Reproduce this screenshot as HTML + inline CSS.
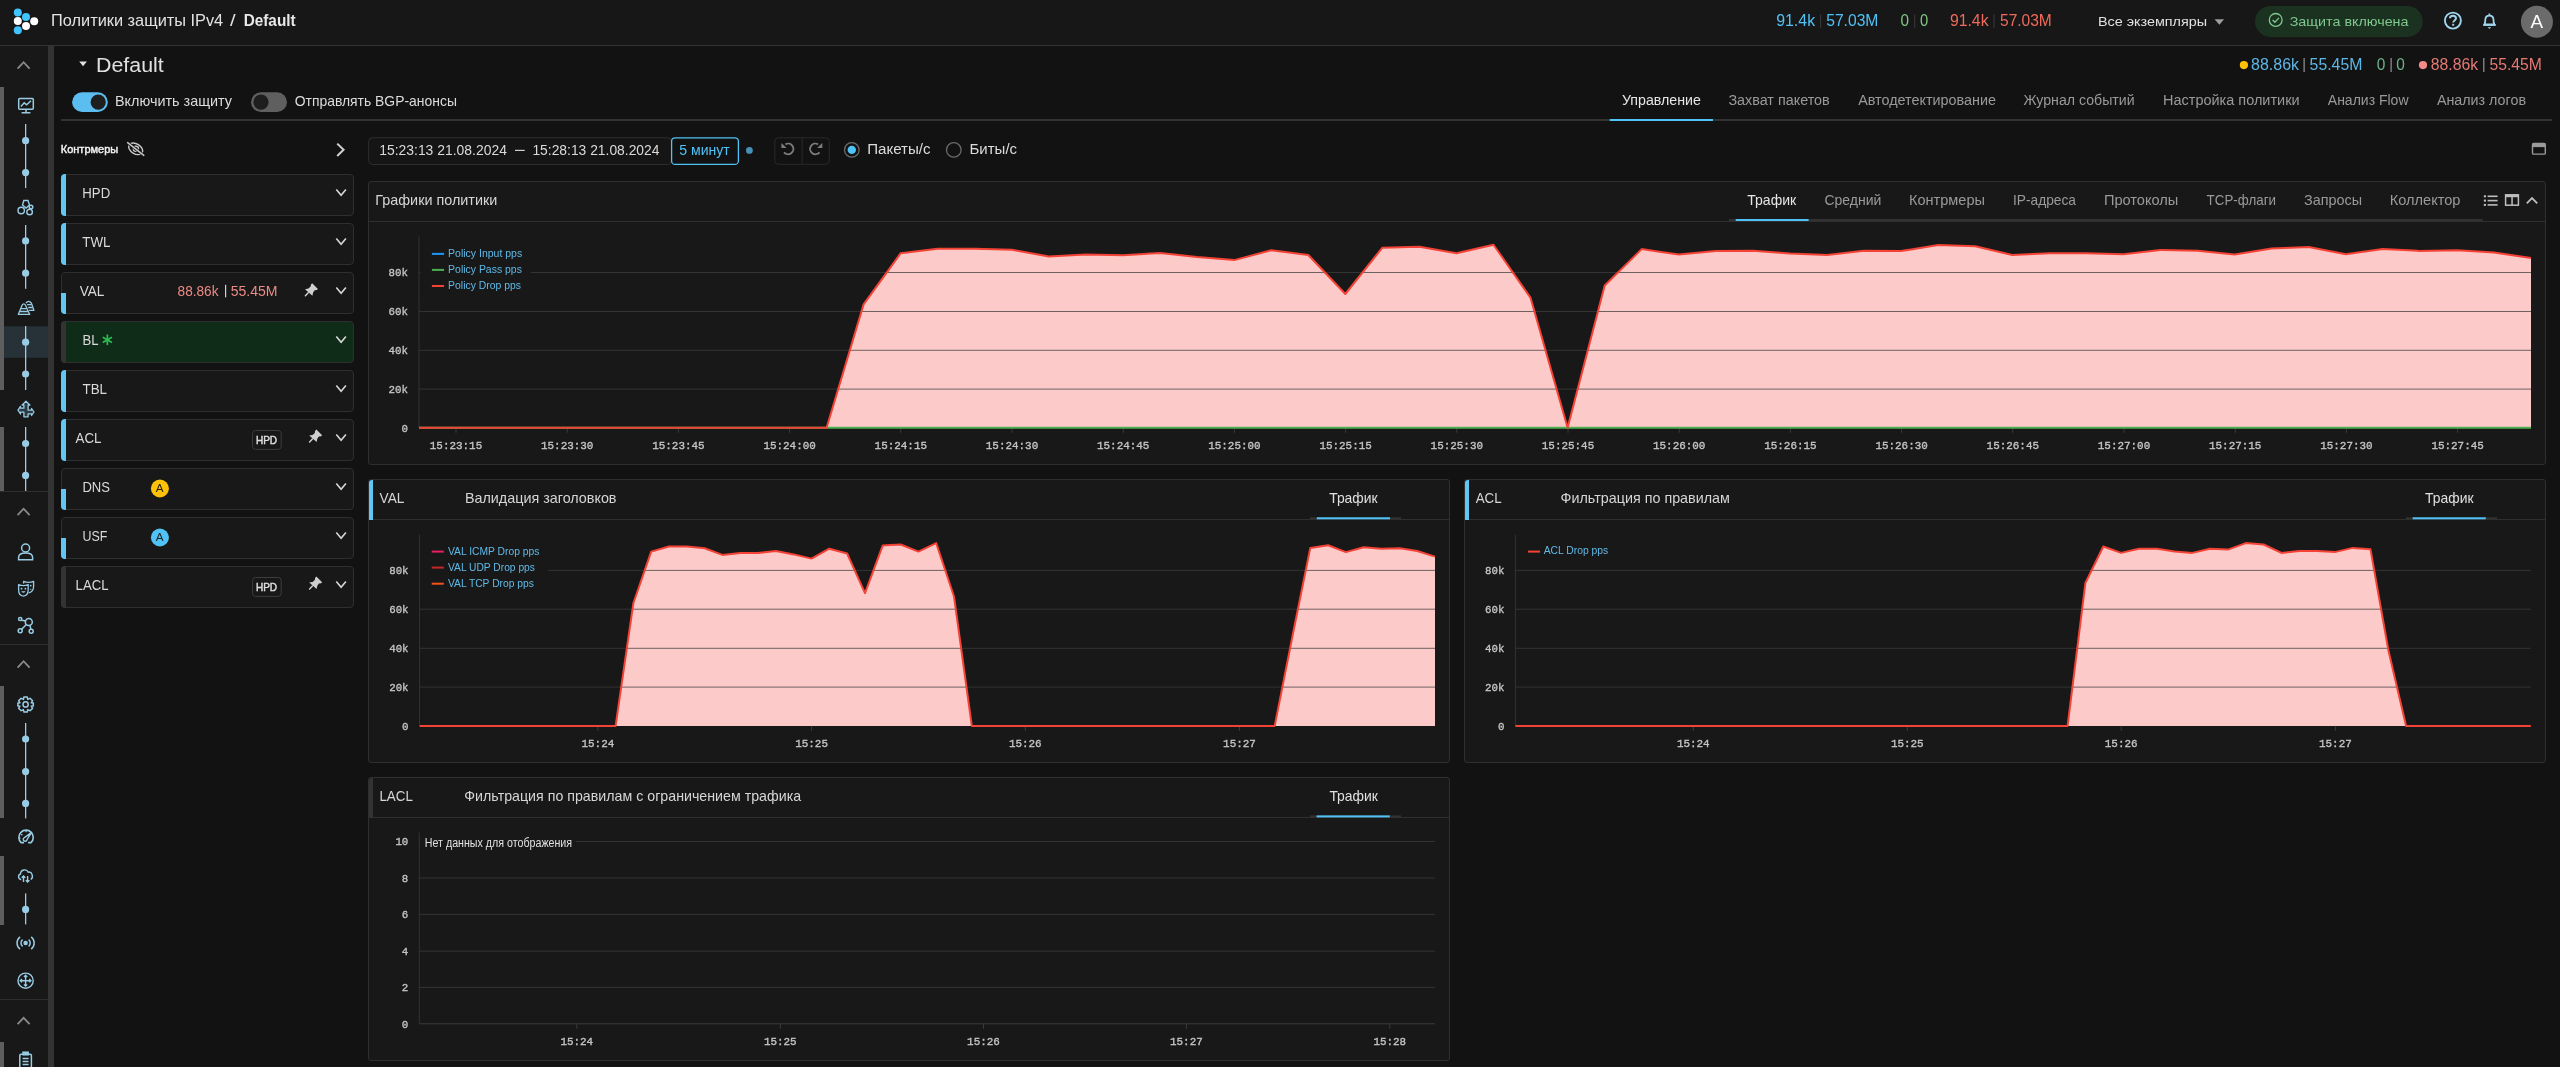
<!DOCTYPE html>
<html lang="ru"><head><meta charset="utf-8"><title>Политики защиты IPv4 / Default</title>
<style>
*{box-sizing:border-box;margin:0;padding:0}
html,body{width:2560px;height:1067px;overflow:hidden;background:#121212;font-family:"Liberation Sans",sans-serif;color:#e0e0e0}
#topbar{position:absolute;left:0;top:0;width:2560px;height:46px;background:#171717;border-bottom:1px solid #333}
#sidebar{position:absolute;left:0;top:46px;width:48px;height:1021px;background:#181818}
#sbstrip{position:absolute;left:48px;top:46px;width:6px;height:1021px;background:#333}
.gbar{position:absolute;left:0;width:4px;background:#5e5e5e}
#charts,#ui{position:absolute;left:0;top:0;will-change:transform}
#charts text.ax{font-family:"Liberation Mono",monospace;font-size:11.6px;fill:#c4c4c4;stroke:#c4c4c4;stroke-width:0.35px}
.card{position:absolute;background:#181818;border:1px solid #2f2f2f;border-radius:3px}
.card .hd{position:absolute;left:0;right:0;top:0;height:40px;border-bottom:1px solid #2f2f2f}
.card .acc{position:absolute;left:0;top:0;width:4px;height:40px;background:#62c6f5;border-radius:3px 0 0 0}
.card .acc.grey{background:#333}
.cm{position:absolute;left:61px;width:293px;height:42px;background:#181818;border:1px solid #2f2f2f;border-radius:4px}
.cm.bl{background:#0e2c18}
.acc{position:absolute;left:61px;width:5px;background:#62c6f5}
.acc.grey{background:#333}
</style></head><body>
<div id="topbar"></div>
<div id="sidebar"></div>
<div id="sbstrip"></div>
<div class="gbar" style="top:87px;height:303px"></div>
<div class="gbar" style="top:427px;height:64px"></div>
<div class="gbar" style="top:686px;height:132px"></div>
<div class="gbar" style="top:856px;height:69px"></div>
<div class="gbar" style="top:1042px;height:25px"></div>
<div class="cm" style="top:174px"></div>
<div class="acc" style="top:174px;height:42px;border-radius:4px 0 0 4px"></div>
<div class="cm" style="top:223px"></div>
<div class="acc" style="top:223px;height:42px;border-radius:4px 0 0 4px"></div>
<div class="cm" style="top:272px"></div>
<div class="acc" style="top:293px;height:21px;border-radius:0 0 0 4px"></div>
<div class="cm bl" style="top:321px"></div>
<div class="acc grey" style="top:321px;height:42px;border-radius:4px 0 0 4px"></div>
<div class="cm" style="top:370px"></div>
<div class="acc" style="top:370px;height:42px;border-radius:4px 0 0 4px"></div>
<div class="cm" style="top:419px"></div>
<div class="acc" style="top:419px;height:42px;border-radius:4px 0 0 4px"></div>
<div class="cm" style="top:468px"></div>
<div class="acc" style="top:489px;height:21px;border-radius:0 0 0 4px"></div>
<div class="cm" style="top:517px"></div>
<div class="acc" style="top:538px;height:21px;border-radius:0 0 0 4px"></div>
<div class="cm" style="top:566px"></div>
<div class="acc grey" style="top:566px;height:42px;border-radius:4px 0 0 4px"></div>
<div class="card" style="left:368px;top:181px;width:2178px;height:284px"><div class="hd"></div></div>
<div class="card" style="left:368px;top:479px;width:1082px;height:284px"><div class="hd"></div><div class="acc"></div></div>
<div class="card" style="left:1464px;top:479px;width:1082px;height:284px"><div class="hd"></div><div class="acc"></div></div>
<div class="card" style="left:368px;top:777px;width:1082px;height:284px"><div class="hd"></div><div class="acc grey"></div></div>
<svg id="charts" width="2560" height="1067" viewBox="0 0 2560 1067"><line x1="419.0" y1="236.5" x2="419.0" y2="427.8" stroke="#333" stroke-width="1"/>
<path d="M419.0,427.8 L419.0,427.8 L456.1,427.8 L493.1,427.8 L530.2,427.8 L567.2,427.8 L604.3,427.8 L641.3,427.8 L678.4,427.8 L715.4,427.8 L752.5,427.8 L789.5,427.8 L826.6,427.8 L863.6,304.4 L900.7,253.2 L937.7,248.7 L974.8,248.7 L1011.8,249.7 L1048.9,256.6 L1085.9,254.6 L1123.0,255.2 L1160.1,253.0 L1197.1,257.0 L1234.2,260.1 L1271.2,250.3 L1308.3,255.0 L1345.3,294.0 L1382.4,247.7 L1419.4,246.7 L1456.5,253.2 L1493.5,244.8 L1530.6,297.9 L1567.6,427.8 L1604.7,285.5 L1641.7,249.1 L1678.8,254.6 L1715.8,251.1 L1752.9,250.7 L1789.9,253.6 L1827.0,255.0 L1864.1,250.7 L1901.1,251.1 L1938.2,245.0 L1975.2,246.3 L2012.3,255.0 L2049.3,253.2 L2086.4,253.2 L2123.4,254.2 L2160.5,250.0 L2197.5,250.7 L2234.6,254.6 L2271.6,248.5 L2308.7,247.0 L2345.7,254.3 L2382.8,249.1 L2419.8,250.9 L2456.9,250.2 L2493.9,252.5 L2531.0,258.1 L2531.0,427.8 Z" fill="#fccbc9"/>
<line x1="419.0" y1="272.5" x2="2531.0" y2="272.5" stroke="#3d3d3d" stroke-opacity="0.74" stroke-width="1"/>
<line x1="419.0" y1="311.5" x2="2531.0" y2="311.5" stroke="#3d3d3d" stroke-opacity="0.74" stroke-width="1"/>
<line x1="419.0" y1="350.3" x2="2531.0" y2="350.3" stroke="#3d3d3d" stroke-opacity="0.74" stroke-width="1"/>
<line x1="419.0" y1="389.1" x2="2531.0" y2="389.1" stroke="#3d3d3d" stroke-opacity="0.74" stroke-width="1"/>
<line x1="456.0" y1="427.8" x2="456.0" y2="432.8" stroke="#3b3b3b" stroke-width="1"/>
<text x="456.0" y="448.8" text-anchor="middle" class="ax" textLength="52.4" lengthAdjust="spacingAndGlyphs">15:23:15</text>
<line x1="567.2" y1="427.8" x2="567.2" y2="432.8" stroke="#3b3b3b" stroke-width="1"/>
<text x="567.2" y="448.8" text-anchor="middle" class="ax" textLength="52.4" lengthAdjust="spacingAndGlyphs">15:23:30</text>
<line x1="678.4" y1="427.8" x2="678.4" y2="432.8" stroke="#3b3b3b" stroke-width="1"/>
<text x="678.4" y="448.8" text-anchor="middle" class="ax" textLength="52.4" lengthAdjust="spacingAndGlyphs">15:23:45</text>
<line x1="789.6" y1="427.8" x2="789.6" y2="432.8" stroke="#3b3b3b" stroke-width="1"/>
<text x="789.6" y="448.8" text-anchor="middle" class="ax" textLength="52.4" lengthAdjust="spacingAndGlyphs">15:24:00</text>
<line x1="900.8" y1="427.8" x2="900.8" y2="432.8" stroke="#3b3b3b" stroke-width="1"/>
<text x="900.8" y="448.8" text-anchor="middle" class="ax" textLength="52.4" lengthAdjust="spacingAndGlyphs">15:24:15</text>
<line x1="1012.0" y1="427.8" x2="1012.0" y2="432.8" stroke="#3b3b3b" stroke-width="1"/>
<text x="1012.0" y="448.8" text-anchor="middle" class="ax" textLength="52.4" lengthAdjust="spacingAndGlyphs">15:24:30</text>
<line x1="1123.2" y1="427.8" x2="1123.2" y2="432.8" stroke="#3b3b3b" stroke-width="1"/>
<text x="1123.2" y="448.8" text-anchor="middle" class="ax" textLength="52.4" lengthAdjust="spacingAndGlyphs">15:24:45</text>
<line x1="1234.4" y1="427.8" x2="1234.4" y2="432.8" stroke="#3b3b3b" stroke-width="1"/>
<text x="1234.4" y="448.8" text-anchor="middle" class="ax" textLength="52.4" lengthAdjust="spacingAndGlyphs">15:25:00</text>
<line x1="1345.6" y1="427.8" x2="1345.6" y2="432.8" stroke="#3b3b3b" stroke-width="1"/>
<text x="1345.6" y="448.8" text-anchor="middle" class="ax" textLength="52.4" lengthAdjust="spacingAndGlyphs">15:25:15</text>
<line x1="1456.8" y1="427.8" x2="1456.8" y2="432.8" stroke="#3b3b3b" stroke-width="1"/>
<text x="1456.8" y="448.8" text-anchor="middle" class="ax" textLength="52.4" lengthAdjust="spacingAndGlyphs">15:25:30</text>
<line x1="1568.0" y1="427.8" x2="1568.0" y2="432.8" stroke="#3b3b3b" stroke-width="1"/>
<text x="1568.0" y="448.8" text-anchor="middle" class="ax" textLength="52.4" lengthAdjust="spacingAndGlyphs">15:25:45</text>
<line x1="1679.2" y1="427.8" x2="1679.2" y2="432.8" stroke="#3b3b3b" stroke-width="1"/>
<text x="1679.2" y="448.8" text-anchor="middle" class="ax" textLength="52.4" lengthAdjust="spacingAndGlyphs">15:26:00</text>
<line x1="1790.4" y1="427.8" x2="1790.4" y2="432.8" stroke="#3b3b3b" stroke-width="1"/>
<text x="1790.4" y="448.8" text-anchor="middle" class="ax" textLength="52.4" lengthAdjust="spacingAndGlyphs">15:26:15</text>
<line x1="1901.6" y1="427.8" x2="1901.6" y2="432.8" stroke="#3b3b3b" stroke-width="1"/>
<text x="1901.6" y="448.8" text-anchor="middle" class="ax" textLength="52.4" lengthAdjust="spacingAndGlyphs">15:26:30</text>
<line x1="2012.8" y1="427.8" x2="2012.8" y2="432.8" stroke="#3b3b3b" stroke-width="1"/>
<text x="2012.8" y="448.8" text-anchor="middle" class="ax" textLength="52.4" lengthAdjust="spacingAndGlyphs">15:26:45</text>
<line x1="2124.0" y1="427.8" x2="2124.0" y2="432.8" stroke="#3b3b3b" stroke-width="1"/>
<text x="2124.0" y="448.8" text-anchor="middle" class="ax" textLength="52.4" lengthAdjust="spacingAndGlyphs">15:27:00</text>
<line x1="2235.2" y1="427.8" x2="2235.2" y2="432.8" stroke="#3b3b3b" stroke-width="1"/>
<text x="2235.2" y="448.8" text-anchor="middle" class="ax" textLength="52.4" lengthAdjust="spacingAndGlyphs">15:27:15</text>
<line x1="2346.4" y1="427.8" x2="2346.4" y2="432.8" stroke="#3b3b3b" stroke-width="1"/>
<text x="2346.4" y="448.8" text-anchor="middle" class="ax" textLength="52.4" lengthAdjust="spacingAndGlyphs">15:27:30</text>
<line x1="2457.6" y1="427.8" x2="2457.6" y2="432.8" stroke="#3b3b3b" stroke-width="1"/>
<text x="2457.6" y="448.8" text-anchor="middle" class="ax" textLength="52.4" lengthAdjust="spacingAndGlyphs">15:27:45</text>
<text x="408.0" y="276.4" text-anchor="end" class="ax" textLength="19.4" lengthAdjust="spacingAndGlyphs">80k</text>
<text x="408.0" y="315.4" text-anchor="end" class="ax" textLength="19.4" lengthAdjust="spacingAndGlyphs">60k</text>
<text x="408.0" y="354.2" text-anchor="end" class="ax" textLength="19.4" lengthAdjust="spacingAndGlyphs">40k</text>
<text x="408.0" y="393.0" text-anchor="end" class="ax" textLength="19.4" lengthAdjust="spacingAndGlyphs">20k</text>
<text x="408.0" y="431.6" text-anchor="end" class="ax" textLength="6.5" lengthAdjust="spacingAndGlyphs">0</text>
<line x1="419.0" y1="427.8" x2="2531.0" y2="427.8" stroke="#4caf50" stroke-width="2"/>
<path d="M419.0,427.8 L456.1,427.8 L493.1,427.8 L530.2,427.8 L567.2,427.8 L604.3,427.8 L641.3,427.8 L678.4,427.8 L715.4,427.8 L752.5,427.8 L789.5,427.8 L826.6,427.8 L863.6,304.4 L900.7,253.2 L937.7,248.7 L974.8,248.7 L1011.8,249.7 L1048.9,256.6 L1085.9,254.6 L1123.0,255.2 L1160.1,253.0 L1197.1,257.0 L1234.2,260.1 L1271.2,250.3 L1308.3,255.0 L1345.3,294.0 L1382.4,247.7 L1419.4,246.7 L1456.5,253.2 L1493.5,244.8 L1530.6,297.9 L1567.6,427.8 L1604.7,285.5 L1641.7,249.1 L1678.8,254.6 L1715.8,251.1 L1752.9,250.7 L1789.9,253.6 L1827.0,255.0 L1864.1,250.7 L1901.1,251.1 L1938.2,245.0 L1975.2,246.3 L2012.3,255.0 L2049.3,253.2 L2086.4,253.2 L2123.4,254.2 L2160.5,250.0 L2197.5,250.7 L2234.6,254.6 L2271.6,248.5 L2308.7,247.0 L2345.7,254.3 L2382.8,249.1 L2419.8,250.9 L2456.9,250.2 L2493.9,252.5 L2531.0,258.1" fill="none" stroke="#f44336" stroke-width="2" stroke-linejoin="round"/>
<line x1="419.6" y1="534.7" x2="419.6" y2="725.9" stroke="#333" stroke-width="1"/>
<path d="M419.6,725.9 L419.6,725.9 L437.4,725.9 L455.2,725.9 L473.0,725.9 L490.9,725.9 L508.7,725.9 L526.5,725.9 L544.3,725.9 L562.1,725.9 L579.9,725.9 L597.7,725.9 L615.6,725.9 L633.4,603.0 L651.2,551.6 L669.0,546.5 L686.8,546.5 L704.6,548.2 L722.4,554.9 L740.3,553.0 L758.1,553.0 L775.9,551.0 L793.7,554.4 L811.5,558.6 L829.3,548.7 L847.1,553.5 L865.0,593.2 L882.8,545.4 L900.6,544.5 L918.4,551.6 L936.2,543.1 L954.0,596.5 L971.8,725.9 L989.6,725.9 L1007.5,725.9 L1025.3,725.9 L1043.1,725.9 L1060.9,725.9 L1078.7,725.9 L1096.5,725.9 L1114.3,725.9 L1132.2,725.9 L1150.0,725.9 L1167.8,725.9 L1185.6,725.9 L1203.4,725.9 L1221.2,725.9 L1239.0,725.9 L1256.9,725.9 L1274.7,725.9 L1292.5,636.0 L1310.3,547.9 L1328.1,545.3 L1345.9,552.1 L1363.7,547.3 L1381.6,548.7 L1399.4,548.2 L1417.2,551.0 L1435.0,556.6 L1435.0,725.9 Z" fill="#fccbc9"/>
<line x1="419.6" y1="570.4" x2="1435.0" y2="570.4" stroke="#3d3d3d" stroke-opacity="0.74" stroke-width="1"/>
<line x1="419.6" y1="609.2" x2="1435.0" y2="609.2" stroke="#3d3d3d" stroke-opacity="0.74" stroke-width="1"/>
<line x1="419.6" y1="648.3" x2="1435.0" y2="648.3" stroke="#3d3d3d" stroke-opacity="0.74" stroke-width="1"/>
<line x1="419.6" y1="687.1" x2="1435.0" y2="687.1" stroke="#3d3d3d" stroke-opacity="0.74" stroke-width="1"/>
<line x1="597.9" y1="725.9" x2="597.9" y2="730.9" stroke="#3b3b3b" stroke-width="1"/>
<text x="597.9" y="746.9" text-anchor="middle" class="ax" textLength="32.8" lengthAdjust="spacingAndGlyphs">15:24</text>
<line x1="811.6" y1="725.9" x2="811.6" y2="730.9" stroke="#3b3b3b" stroke-width="1"/>
<text x="811.6" y="746.9" text-anchor="middle" class="ax" textLength="32.8" lengthAdjust="spacingAndGlyphs">15:25</text>
<line x1="1025.3" y1="725.9" x2="1025.3" y2="730.9" stroke="#3b3b3b" stroke-width="1"/>
<text x="1025.3" y="746.9" text-anchor="middle" class="ax" textLength="32.8" lengthAdjust="spacingAndGlyphs">15:26</text>
<line x1="1239.5" y1="725.9" x2="1239.5" y2="730.9" stroke="#3b3b3b" stroke-width="1"/>
<text x="1239.5" y="746.9" text-anchor="middle" class="ax" textLength="32.8" lengthAdjust="spacingAndGlyphs">15:27</text>
<text x="408.6" y="574.3" text-anchor="end" class="ax" textLength="19.4" lengthAdjust="spacingAndGlyphs">80k</text>
<text x="408.6" y="613.1" text-anchor="end" class="ax" textLength="19.4" lengthAdjust="spacingAndGlyphs">60k</text>
<text x="408.6" y="652.2" text-anchor="end" class="ax" textLength="19.4" lengthAdjust="spacingAndGlyphs">40k</text>
<text x="408.6" y="691.0" text-anchor="end" class="ax" textLength="19.4" lengthAdjust="spacingAndGlyphs">20k</text>
<text x="408.6" y="729.8" text-anchor="end" class="ax" textLength="6.5" lengthAdjust="spacingAndGlyphs">0</text>
<path d="M419.6,725.9 L437.4,725.9 L455.2,725.9 L473.0,725.9 L490.9,725.9 L508.7,725.9 L526.5,725.9 L544.3,725.9 L562.1,725.9 L579.9,725.9 L597.7,725.9 L615.6,725.9 L633.4,603.0 L651.2,551.6 L669.0,546.5 L686.8,546.5 L704.6,548.2 L722.4,554.9 L740.3,553.0 L758.1,553.0 L775.9,551.0 L793.7,554.4 L811.5,558.6 L829.3,548.7 L847.1,553.5 L865.0,593.2 L882.8,545.4 L900.6,544.5 L918.4,551.6 L936.2,543.1 L954.0,596.5 L971.8,725.9 L989.6,725.9 L1007.5,725.9 L1025.3,725.9 L1043.1,725.9 L1060.9,725.9 L1078.7,725.9 L1096.5,725.9 L1114.3,725.9 L1132.2,725.9 L1150.0,725.9 L1167.8,725.9 L1185.6,725.9 L1203.4,725.9 L1221.2,725.9 L1239.0,725.9 L1256.9,725.9 L1274.7,725.9 L1292.5,636.0 L1310.3,547.9 L1328.1,545.3 L1345.9,552.1 L1363.7,547.3 L1381.6,548.7 L1399.4,548.2 L1417.2,551.0 L1435.0,556.6" fill="none" stroke="#f44336" stroke-width="2" stroke-linejoin="round"/>
<line x1="1515.4" y1="534.7" x2="1515.4" y2="725.9" stroke="#333" stroke-width="1"/>
<path d="M1515.4,725.9 L1515.4,725.9 L1533.2,725.9 L1551.0,725.9 L1568.8,725.9 L1586.7,725.9 L1604.5,725.9 L1622.3,725.9 L1640.1,725.9 L1657.9,725.9 L1675.7,725.9 L1693.5,725.9 L1711.4,725.9 L1729.2,725.9 L1747.0,725.9 L1764.8,725.9 L1782.6,725.9 L1800.4,725.9 L1818.2,725.9 L1836.1,725.9 L1853.9,725.9 L1871.7,725.9 L1889.5,725.9 L1907.3,725.9 L1925.1,725.9 L1942.9,725.9 L1960.8,725.9 L1978.6,725.9 L1996.4,725.9 L2014.2,725.9 L2032.0,725.9 L2049.8,725.9 L2067.6,725.9 L2085.4,583.0 L2103.3,546.5 L2121.1,552.9 L2138.9,548.7 L2156.7,548.7 L2174.5,551.5 L2192.3,552.9 L2210.1,548.7 L2228.0,549.6 L2245.8,543.1 L2263.6,544.5 L2281.4,552.9 L2299.2,551.0 L2317.0,551.0 L2334.8,552.1 L2352.7,547.9 L2370.5,549.3 L2388.3,649.9 L2406.1,725.9 L2423.9,725.9 L2441.7,725.9 L2459.5,725.9 L2477.4,725.9 L2495.2,725.9 L2513.0,725.9 L2530.8,725.9 L2530.8,725.9 Z" fill="#fccbc9"/>
<line x1="1515.4" y1="570.4" x2="2530.8" y2="570.4" stroke="#3d3d3d" stroke-opacity="0.74" stroke-width="1"/>
<line x1="1515.4" y1="609.2" x2="2530.8" y2="609.2" stroke="#3d3d3d" stroke-opacity="0.74" stroke-width="1"/>
<line x1="1515.4" y1="648.3" x2="2530.8" y2="648.3" stroke="#3d3d3d" stroke-opacity="0.74" stroke-width="1"/>
<line x1="1515.4" y1="687.1" x2="2530.8" y2="687.1" stroke="#3d3d3d" stroke-opacity="0.74" stroke-width="1"/>
<line x1="1693.3" y1="725.9" x2="1693.3" y2="730.9" stroke="#3b3b3b" stroke-width="1"/>
<text x="1693.3" y="746.9" text-anchor="middle" class="ax" textLength="32.8" lengthAdjust="spacingAndGlyphs">15:24</text>
<line x1="1907.3" y1="725.9" x2="1907.3" y2="730.9" stroke="#3b3b3b" stroke-width="1"/>
<text x="1907.3" y="746.9" text-anchor="middle" class="ax" textLength="32.8" lengthAdjust="spacingAndGlyphs">15:25</text>
<line x1="2121.2" y1="725.9" x2="2121.2" y2="730.9" stroke="#3b3b3b" stroke-width="1"/>
<text x="2121.2" y="746.9" text-anchor="middle" class="ax" textLength="32.8" lengthAdjust="spacingAndGlyphs">15:26</text>
<line x1="2335.4" y1="725.9" x2="2335.4" y2="730.9" stroke="#3b3b3b" stroke-width="1"/>
<text x="2335.4" y="746.9" text-anchor="middle" class="ax" textLength="32.8" lengthAdjust="spacingAndGlyphs">15:27</text>
<text x="1504.4" y="574.3" text-anchor="end" class="ax" textLength="19.4" lengthAdjust="spacingAndGlyphs">80k</text>
<text x="1504.4" y="613.1" text-anchor="end" class="ax" textLength="19.4" lengthAdjust="spacingAndGlyphs">60k</text>
<text x="1504.4" y="652.2" text-anchor="end" class="ax" textLength="19.4" lengthAdjust="spacingAndGlyphs">40k</text>
<text x="1504.4" y="691.0" text-anchor="end" class="ax" textLength="19.4" lengthAdjust="spacingAndGlyphs">20k</text>
<text x="1504.4" y="729.8" text-anchor="end" class="ax" textLength="6.5" lengthAdjust="spacingAndGlyphs">0</text>
<path d="M1515.4,725.9 L1533.2,725.9 L1551.0,725.9 L1568.8,725.9 L1586.7,725.9 L1604.5,725.9 L1622.3,725.9 L1640.1,725.9 L1657.9,725.9 L1675.7,725.9 L1693.5,725.9 L1711.4,725.9 L1729.2,725.9 L1747.0,725.9 L1764.8,725.9 L1782.6,725.9 L1800.4,725.9 L1818.2,725.9 L1836.1,725.9 L1853.9,725.9 L1871.7,725.9 L1889.5,725.9 L1907.3,725.9 L1925.1,725.9 L1942.9,725.9 L1960.8,725.9 L1978.6,725.9 L1996.4,725.9 L2014.2,725.9 L2032.0,725.9 L2049.8,725.9 L2067.6,725.9 L2085.4,583.0 L2103.3,546.5 L2121.1,552.9 L2138.9,548.7 L2156.7,548.7 L2174.5,551.5 L2192.3,552.9 L2210.1,548.7 L2228.0,549.6 L2245.8,543.1 L2263.6,544.5 L2281.4,552.9 L2299.2,551.0 L2317.0,551.0 L2334.8,552.1 L2352.7,547.9 L2370.5,549.3 L2388.3,649.9 L2406.1,725.9 L2423.9,725.9 L2441.7,725.9 L2459.5,725.9 L2477.4,725.9 L2495.2,725.9 L2513.0,725.9 L2530.8,725.9" fill="none" stroke="#f44336" stroke-width="2" stroke-linejoin="round"/>
<line x1="419.3" y1="832.6" x2="419.3" y2="1023.8" stroke="#333" stroke-width="1"/>
<line x1="419.3" y1="841.5" x2="1434.9" y2="841.5" stroke="#3d3d3d" stroke-opacity="0.74" stroke-width="1"/>
<line x1="419.3" y1="878.0" x2="1434.9" y2="878.0" stroke="#3d3d3d" stroke-opacity="0.74" stroke-width="1"/>
<line x1="419.3" y1="914.4" x2="1434.9" y2="914.4" stroke="#3d3d3d" stroke-opacity="0.74" stroke-width="1"/>
<line x1="419.3" y1="951.2" x2="1434.9" y2="951.2" stroke="#3d3d3d" stroke-opacity="0.74" stroke-width="1"/>
<line x1="419.3" y1="987.4" x2="1434.9" y2="987.4" stroke="#3d3d3d" stroke-opacity="0.74" stroke-width="1"/>
<line x1="576.8" y1="1023.8" x2="576.8" y2="1028.8" stroke="#3b3b3b" stroke-width="1"/>
<text x="576.8" y="1044.8" text-anchor="middle" class="ax" textLength="32.8" lengthAdjust="spacingAndGlyphs">15:24</text>
<line x1="780.3" y1="1023.8" x2="780.3" y2="1028.8" stroke="#3b3b3b" stroke-width="1"/>
<text x="780.3" y="1044.8" text-anchor="middle" class="ax" textLength="32.8" lengthAdjust="spacingAndGlyphs">15:25</text>
<line x1="983.5" y1="1023.8" x2="983.5" y2="1028.8" stroke="#3b3b3b" stroke-width="1"/>
<text x="983.5" y="1044.8" text-anchor="middle" class="ax" textLength="32.8" lengthAdjust="spacingAndGlyphs">15:26</text>
<line x1="1186.4" y1="1023.8" x2="1186.4" y2="1028.8" stroke="#3b3b3b" stroke-width="1"/>
<text x="1186.4" y="1044.8" text-anchor="middle" class="ax" textLength="32.8" lengthAdjust="spacingAndGlyphs">15:27</text>
<line x1="1389.8" y1="1023.8" x2="1389.8" y2="1028.8" stroke="#3b3b3b" stroke-width="1"/>
<text x="1389.8" y="1044.8" text-anchor="middle" class="ax" textLength="32.8" lengthAdjust="spacingAndGlyphs">15:28</text>
<text x="408.3" y="845.4" text-anchor="end" class="ax" textLength="12.9" lengthAdjust="spacingAndGlyphs">10</text>
<text x="408.3" y="881.9" text-anchor="end" class="ax" textLength="6.5" lengthAdjust="spacingAndGlyphs">8</text>
<text x="408.3" y="918.3" text-anchor="end" class="ax" textLength="6.5" lengthAdjust="spacingAndGlyphs">6</text>
<text x="408.3" y="955.1" text-anchor="end" class="ax" textLength="6.5" lengthAdjust="spacingAndGlyphs">4</text>
<text x="408.3" y="991.3" text-anchor="end" class="ax" textLength="6.5" lengthAdjust="spacingAndGlyphs">2</text>
<text x="408.3" y="1027.7" text-anchor="end" class="ax" textLength="6.5" lengthAdjust="spacingAndGlyphs">0</text>
<line x1="419.3" y1="1023.8" x2="1434.9" y2="1023.8" stroke="#3b3b3b" stroke-width="1"/></svg>
<svg id="ui" width="2560" height="1067" viewBox="0 0 2560 1067"><rect x="420.2" y="237" width="110.5" height="62" fill="#181818"/>
<rect x="431.9" y="252.9" width="12.2" height="2" fill="#2196f3"/>
<text x="448.1" y="257.1" font-family="Liberation Sans" font-size="10.8" font-weight="400" fill="#60bae8" textLength="74.1" lengthAdjust="spacingAndGlyphs">Policy Input pps</text>
<rect x="431.9" y="268.9" width="12.2" height="2" fill="#4caf50"/>
<text x="448.1" y="273.1" font-family="Liberation Sans" font-size="10.8" font-weight="400" fill="#60bae8" textLength="73.8" lengthAdjust="spacingAndGlyphs">Policy Pass pps</text>
<rect x="431.9" y="285.0" width="12.2" height="2" fill="#f44336"/>
<text x="448.1" y="289.2" font-family="Liberation Sans" font-size="10.8" font-weight="400" fill="#60bae8" textLength="72.9" lengthAdjust="spacingAndGlyphs">Policy Drop pps</text>
<rect x="420.2" y="535" width="127.7" height="63" fill="#181818"/>
<rect x="431.7" y="550.6" width="12.1" height="2" fill="#e91e63"/>
<text x="448.0" y="554.8" font-family="Liberation Sans" font-size="10.8" font-weight="400" fill="#60bae8" textLength="91.4" lengthAdjust="spacingAndGlyphs">VAL ICMP Drop pps</text>
<rect x="431.7" y="566.6" width="12.1" height="2" fill="#c62828"/>
<text x="448.0" y="570.8" font-family="Liberation Sans" font-size="10.8" font-weight="400" fill="#60bae8" textLength="86.9" lengthAdjust="spacingAndGlyphs">VAL UDP Drop pps</text>
<rect x="431.7" y="582.7" width="12.1" height="2" fill="#f4511e"/>
<text x="448.0" y="586.9" font-family="Liberation Sans" font-size="10.8" font-weight="400" fill="#60bae8" textLength="85.8" lengthAdjust="spacingAndGlyphs">VAL TCP Drop pps</text>
<rect x="1516" y="535" width="100" height="30.6" fill="#181818"/>
<rect x="1528" y="550.6" width="12.1" height="2" fill="#f44336"/>
<text x="1543.7" y="554.3" font-family="Liberation Sans" font-size="10.8" font-weight="400" fill="#60bae8" textLength="64.5" lengthAdjust="spacingAndGlyphs">ACL Drop pps</text>
<rect x="420" y="833" width="155.7" height="20.5" fill="#181818"/>
<text x="424.8" y="846.5" font-family="Liberation Sans" font-size="12.0" font-weight="400" fill="#e0e0e0" textLength="147.3" lengthAdjust="spacingAndGlyphs">Нет данных для отображения</text><circle cx="17.8" cy="12.4" r="4" fill="#40c4ff"/>
<circle cx="26.0" cy="16.9" r="4" fill="#40c4ff"/>
<circle cx="17.8" cy="21.1" r="4" fill="#ffffff"/>
<circle cx="34.2" cy="21.3" r="4" fill="#ffffff"/>
<circle cx="26.0" cy="26.0" r="4" fill="#ffffff"/>
<circle cx="17.8" cy="30.2" r="4" fill="#40c4ff"/>
<text x="51.1" y="26.2" font-family="Liberation Sans" font-size="17.0" font-weight="400" fill="#e2e2e2" textLength="172.1" lengthAdjust="spacingAndGlyphs">Политики защиты IPv4</text>
<text x="229.9" y="26.2" font-family="Liberation Sans" font-size="17.0" font-weight="400" fill="#e2e2e2" textLength="5.6" lengthAdjust="spacingAndGlyphs">/</text>
<text x="243.7" y="26.2" font-family="Liberation Sans" font-size="17.0" font-weight="700" fill="#e8e8e8" textLength="51.9" lengthAdjust="spacingAndGlyphs">Default</text>
<text x="1776.2" y="26.1" font-family="Liberation Sans" font-size="16.3" font-weight="400" fill="#4fc3f7" textLength="38.9" lengthAdjust="spacingAndGlyphs">91.4k</text>
<text x="1826.2" y="26.1" font-family="Liberation Sans" font-size="16.3" font-weight="400" fill="#4fc3f7" textLength="52.2" lengthAdjust="spacingAndGlyphs">57.03M</text>
<text x="1900.4" y="26.1" font-family="Liberation Sans" font-size="16.3" font-weight="400" fill="#81c784" textLength="8.5" lengthAdjust="spacingAndGlyphs">0</text>
<text x="1920.0" y="26.1" font-family="Liberation Sans" font-size="16.3" font-weight="400" fill="#81c784" textLength="8.2" lengthAdjust="spacingAndGlyphs">0</text>
<text x="1949.9" y="26.1" font-family="Liberation Sans" font-size="16.3" font-weight="400" fill="#ef6a5a" textLength="38.7" lengthAdjust="spacingAndGlyphs">91.4k</text>
<text x="2000.0" y="26.1" font-family="Liberation Sans" font-size="16.3" font-weight="400" fill="#ef6a5a" textLength="51.8" lengthAdjust="spacingAndGlyphs">57.03M</text>
<rect x="1820.1" y="14.4" width="1" height="13.5" fill="#3a3a3a"/>
<rect x="1914.2" y="14.4" width="1" height="13.5" fill="#3a3a3a"/>
<rect x="1993.5" y="14.4" width="1" height="13.5" fill="#3a3a3a"/>
<text x="2098.0" y="25.5" font-family="Liberation Sans" font-size="13.5" font-weight="400" fill="#e0e0e0" textLength="109.1" lengthAdjust="spacingAndGlyphs">Все экземпляры</text>
<path d="M2214.6,19.3 L2224.1,19.3 L2219.35,24.8 Z" fill="#9e9e9e"/>
<rect x="2255" y="6" width="167.7" height="30.9" rx="15.45" fill="#1b3221"/>
<circle cx="2275.7" cy="19.9" r="6.4" fill="none" stroke="#7fc890" stroke-width="1.3"/>
<path d="M2272.6,20 L2274.9,22.2 L2278.9,17.9" fill="none" stroke="#7fc890" stroke-width="1.3"/>
<text x="2289.7" y="25.5" font-family="Liberation Sans" font-size="13.5" font-weight="400" fill="#7fc890" textLength="118.8" lengthAdjust="spacingAndGlyphs">Защита включена</text>
<circle cx="2452.9" cy="20.6" r="8" fill="none" stroke="#a0d4ec" stroke-width="1.9"/>
<path d="M2449.9,18.3 C2449.9,14.9 2456,14.9 2456,18.3 C2456,20.3 2453.2,20.5 2453.2,22.6" fill="none" stroke="#a0d4ec" stroke-width="1.9"/>
<rect x="2452.2" y="23.8" width="2" height="1.9" fill="#a0d4ec"/>
<path d="M2489.4,13.5 L2489.4,15 M2484.3,24.5 C2485.2,23.5 2485.3,22.5 2485.3,20 C2485.3,17 2487,15.6 2489.4,15.6 C2491.8,15.6 2493.5,17 2493.5,20 C2493.5,22.5 2493.6,23.5 2494.5,24.5 Z" fill="none" stroke="#a0d4ec" stroke-width="1.8" stroke-linejoin="round"/>
<path d="M2483.2,25 L2495.8,25" stroke="#a0d4ec" stroke-width="1.8"/>
<path d="M2487.6,27.3 L2491.2,27.3 L2489.4,29 Z" fill="#a0d4ec"/>
<circle cx="2536.9" cy="21.8" r="16" fill="#6b6b6b"/>
<text x="2530.4" y="27.9" font-family="Liberation Sans" font-size="18.5" font-weight="400" fill="#ffffff" textLength="12.6" lengthAdjust="spacingAndGlyphs">A</text>
<path d="M79.2,61.4 L86.9,61.4 L83.05,66.3 Z" fill="#e0e0e0"/>
<text x="96.0" y="71.6" font-family="Liberation Sans" font-size="19.3" font-weight="400" fill="#e0e0e0" textLength="67.7" lengthAdjust="spacingAndGlyphs">Default</text>
<circle cx="2243.9" cy="65.1" r="4.1" fill="#ffc107"/>
<text x="2251.1" y="70.0" font-family="Liberation Sans" font-size="16.8" font-weight="400" fill="#5db7e6" textLength="47.9" lengthAdjust="spacingAndGlyphs">88.86k</text>
<rect x="2303.4" y="58" width="1.5" height="14" fill="#7a7a7a"/>
<text x="2309.6" y="70.0" font-family="Liberation Sans" font-size="16.8" font-weight="400" fill="#5db7e6" textLength="52.8" lengthAdjust="spacingAndGlyphs">55.45M</text>
<text x="2376.7" y="70.0" font-family="Liberation Sans" font-size="16.8" font-weight="400" fill="#6cb38a" textLength="8.6" lengthAdjust="spacingAndGlyphs">0</text>
<rect x="2390.4" y="58" width="1.5" height="14" fill="#7a7a7a"/>
<text x="2396.3" y="70.0" font-family="Liberation Sans" font-size="16.8" font-weight="400" fill="#6cb38a" textLength="8.6" lengthAdjust="spacingAndGlyphs">0</text>
<circle cx="2423" cy="65.1" r="4.1" fill="#f48a86"/>
<text x="2430.7" y="70.0" font-family="Liberation Sans" font-size="16.8" font-weight="400" fill="#e37a75" textLength="47.4" lengthAdjust="spacingAndGlyphs">88.86k</text>
<rect x="2483" y="58" width="1.5" height="14" fill="#7a7a7a"/>
<text x="2489.5" y="70.0" font-family="Liberation Sans" font-size="16.8" font-weight="400" fill="#e37a75" textLength="52.4" lengthAdjust="spacingAndGlyphs">55.45M</text>
<rect x="72.1" y="92.3" width="35.7" height="19.7" rx="9.85" fill="#5bbdf0"/>
<circle cx="98.2" cy="102.15" r="7.6" fill="#1e1e1e"/>
<text x="115.0" y="106.1" font-family="Liberation Sans" font-size="14.4" font-weight="400" fill="#dcdcdc" textLength="117.0" lengthAdjust="spacingAndGlyphs">Включить защиту</text>
<rect x="251" y="92.3" width="36" height="19.7" rx="9.85" fill="#5f5f5f"/>
<circle cx="261" cy="102.15" r="7.6" fill="#1e1e1e"/>
<text x="294.7" y="106.1" font-family="Liberation Sans" font-size="14.4" font-weight="400" fill="#dcdcdc" textLength="162.2" lengthAdjust="spacingAndGlyphs">Отправлять BGP-анонсы</text>
<rect x="61" y="119" width="2491" height="2" fill="#333"/>
<rect x="1609.75" y="119" width="103.25" height="2" fill="#4fc3f7"/>
<text x="1621.9" y="104.7" font-family="Liberation Sans" font-size="14.0" font-weight="400" fill="#e6e6e6" textLength="79.0" lengthAdjust="spacingAndGlyphs">Управление</text>
<text x="1728.4" y="104.7" font-family="Liberation Sans" font-size="14.0" font-weight="400" fill="#9a9a9a" textLength="101.3" lengthAdjust="spacingAndGlyphs">Захват пакетов</text>
<text x="1858.2" y="104.7" font-family="Liberation Sans" font-size="14.0" font-weight="400" fill="#9a9a9a" textLength="137.8" lengthAdjust="spacingAndGlyphs">Автодетектирование</text>
<text x="2023.4" y="104.7" font-family="Liberation Sans" font-size="14.0" font-weight="400" fill="#9a9a9a" textLength="111.2" lengthAdjust="spacingAndGlyphs">Журнал событий</text>
<text x="2163.0" y="104.7" font-family="Liberation Sans" font-size="14.0" font-weight="400" fill="#9a9a9a" textLength="136.6" lengthAdjust="spacingAndGlyphs">Настройка политики</text>
<text x="2327.8" y="104.7" font-family="Liberation Sans" font-size="14.0" font-weight="400" fill="#9a9a9a" textLength="80.7" lengthAdjust="spacingAndGlyphs">Анализ Flow</text>
<text x="2436.9" y="104.7" font-family="Liberation Sans" font-size="14.0" font-weight="400" fill="#9a9a9a" textLength="89.1" lengthAdjust="spacingAndGlyphs">Анализ логов</text>
<rect x="368.6" y="137.7" width="303" height="26.8" rx="4" fill="#151515" stroke="#2e2e2e" stroke-width="1"/>
<text x="379.2" y="155.1" font-family="Liberation Sans" font-size="14.4" font-weight="400" fill="#dadada" textLength="127.7" lengthAdjust="spacingAndGlyphs">15:23:13 21.08.2024</text>
<rect x="515" y="149.8" width="9.7" height="1.2" fill="#cfcfcf"/>
<text x="532.4" y="155.1" font-family="Liberation Sans" font-size="14.4" font-weight="400" fill="#dadada" textLength="127.1" lengthAdjust="spacingAndGlyphs">15:28:13 21.08.2024</text>
<rect x="671.6" y="137.8" width="66.8" height="26.6" rx="3.5" fill="#121212" stroke="#4fc3f7" stroke-width="1.3"/>
<text x="679.2" y="155.1" font-family="Liberation Sans" font-size="14.4" font-weight="400" fill="#4fc3f7" textLength="50.6" lengthAdjust="spacingAndGlyphs">5 минут</text>
<circle cx="749.4" cy="150.4" r="3.4" fill="#4a8fb5"/>
<rect x="774.8" y="137.8" width="54.5" height="26.5" rx="3.5" fill="#121212" stroke="#2a2a2a" stroke-width="1"/>
<rect x="801.6" y="138" width="1" height="26" fill="#2a2a2a"/>
<path d="M785.45,144.3 A5.3,5.3 0 1 1 784.0,152.3" fill="none" stroke="#7c7c7c" stroke-width="1.9"/>
<path d="M781.4,142.9 L781.4,148.0 L786.6,148.0 Z" fill="#7c7c7c"/>
<path d="M818.05,144.3 A5.3,5.3 0 1 0 819.5,152.3" fill="none" stroke="#7c7c7c" stroke-width="1.9"/>
<path d="M822.3,142.9 L822.3,148.0 L817.1,148.0 Z" fill="#7c7c7c"/>
<circle cx="851.8" cy="149.9" r="7.3" fill="none" stroke="#6a6a6a" stroke-width="1.3"/>
<circle cx="851.8" cy="149.9" r="4.2" fill="#4fc3f7"/>
<text x="867.2" y="153.9" font-family="Liberation Sans" font-size="14.0" font-weight="400" fill="#dcdcdc" textLength="63.4" lengthAdjust="spacingAndGlyphs">Пакеты/с</text>
<circle cx="953.8" cy="149.9" r="7.3" fill="none" stroke="#6a6a6a" stroke-width="1.3"/>
<text x="969.5" y="153.9" font-family="Liberation Sans" font-size="14.0" font-weight="400" fill="#dcdcdc" textLength="47.6" lengthAdjust="spacingAndGlyphs">Биты/с</text>
<rect x="2532.5" y="143.5" width="12.8" height="10.6" rx="1.2" fill="none" stroke="#9a9a9a" stroke-width="1.4"/>
<rect x="2532.5" y="143.5" width="12.8" height="3.6" fill="#9a9a9a"/>
<text x="60.8" y="153.1" font-family="Liberation Sans" font-size="11.2" font-weight="400" fill="#f2f2f2" textLength="57.4" lengthAdjust="spacingAndGlyphs" stroke="#f2f2f2" stroke-width="0.45">Контрмеры</text>
<g fill="none" stroke="#c8c8c8" stroke-width="1.4"><ellipse cx="135.7" cy="148.8" rx="7.6" ry="5.0" transform="rotate(32 135.7 148.8)"/><circle cx="135.9" cy="148.8" r="2.6"/></g><path d="M127.6,142.6 L143.8,155.4" stroke="#141414" stroke-width="3"/><path d="M127.6,142.6 L143.8,155.4" stroke="#c8c8c8" stroke-width="1.5" stroke-linecap="round"/>
<path d="M337.2,143.6 L343.6,149.8 L337.2,156" fill="none" stroke="#d0d0d0" stroke-width="2"/>
<text x="82.3" y="198.2" font-family="Liberation Sans" font-size="14.3" font-weight="400" fill="#dadada" textLength="27.9" lengthAdjust="spacingAndGlyphs">HPD</text>
<path d="M336.3,189.4 L341.1,195.2 L345.9,189.4" fill="none" stroke="#d8d8d8" stroke-width="1.6"/>
<text x="82.3" y="247.2" font-family="Liberation Sans" font-size="14.3" font-weight="400" fill="#dadada" textLength="28.2" lengthAdjust="spacingAndGlyphs">TWL</text>
<path d="M336.3,238.4 L341.1,244.2 L345.9,238.4" fill="none" stroke="#d8d8d8" stroke-width="1.6"/>
<text x="79.7" y="296.2" font-family="Liberation Sans" font-size="14.3" font-weight="400" fill="#dadada" textLength="24.6" lengthAdjust="spacingAndGlyphs">VAL</text>
<path d="M336.3,287.4 L341.1,293.2 L345.9,287.4" fill="none" stroke="#d8d8d8" stroke-width="1.6"/>
<text x="177.6" y="295.8" font-family="Liberation Sans" font-size="14.3" font-weight="400" fill="#ec8b85" textLength="40.9" lengthAdjust="spacingAndGlyphs">88.86k</text>
<rect x="225.0" y="284.8" width="1.2" height="12.5" fill="#cfcfcf"/>
<text x="230.7" y="295.8" font-family="Liberation Sans" font-size="14.3" font-weight="400" fill="#ec8b85" textLength="46.9" lengthAdjust="spacingAndGlyphs">55.45M</text>
<g transform="translate(0.0,0.0)"><path d="M312.2,283.2 L317.9,289.0 L316.9,290.0 L314.7,290.3 L313.1,292.4 L312.4,295.8 L305.0,289.3 L308.4,288.6 L310.6,286.6 L311.0,284.4 Z" fill="#cfcfcf"/><path d="M308.2,292.8 L305.4,295.7" stroke="#cfcfcf" stroke-width="1.5" stroke-linecap="round"/></g>
<text x="82.5" y="345.2" font-family="Liberation Sans" font-size="14.3" font-weight="400" fill="#dadada" textLength="16.1" lengthAdjust="spacingAndGlyphs">BL</text>
<path d="M336.3,336.4 L341.1,342.2 L345.9,336.4" fill="none" stroke="#d8d8d8" stroke-width="1.6"/>
<path d="M107.35,334.50 L107.35,345.10" stroke="#2ebd4e" stroke-width="1.7"/>
<path d="M102.76,337.15 L111.94,342.45" stroke="#2ebd4e" stroke-width="1.7"/>
<path d="M111.94,337.15 L102.76,342.45" stroke="#2ebd4e" stroke-width="1.7"/>
<text x="82.5" y="394.2" font-family="Liberation Sans" font-size="14.3" font-weight="400" fill="#dadada" textLength="24.5" lengthAdjust="spacingAndGlyphs">TBL</text>
<path d="M336.3,385.4 L341.1,391.2 L345.9,385.4" fill="none" stroke="#d8d8d8" stroke-width="1.6"/>
<text x="75.5" y="443.2" font-family="Liberation Sans" font-size="14.3" font-weight="400" fill="#dadada" textLength="25.9" lengthAdjust="spacingAndGlyphs">ACL</text>
<path d="M336.3,434.4 L341.1,440.2 L345.9,434.4" fill="none" stroke="#d8d8d8" stroke-width="1.6"/>
<g transform="translate(4.2,146.3)"><path d="M312.2,283.2 L317.9,289.0 L316.9,290.0 L314.7,290.3 L313.1,292.4 L312.4,295.8 L305.0,289.3 L308.4,288.6 L310.6,286.6 L311.0,284.4 Z" fill="#cfcfcf"/><path d="M308.2,292.8 L305.4,295.7" stroke="#cfcfcf" stroke-width="1.5" stroke-linecap="round"/></g>
<rect x="252.6" y="430.5" width="28.6" height="18.9" rx="3" fill="none" stroke="#3d3d3d" stroke-width="1"/>
<text x="255.9" y="443.5" font-family="Liberation Sans" font-size="10.4" font-weight="400" fill="#e0e0e0" textLength="21.2" lengthAdjust="spacingAndGlyphs" stroke="#e0e0e0" stroke-width="0.4">HPD</text>
<text x="82.4" y="492.2" font-family="Liberation Sans" font-size="14.3" font-weight="400" fill="#dadada" textLength="27.6" lengthAdjust="spacingAndGlyphs">DNS</text>
<path d="M336.3,483.4 L341.1,489.2 L345.9,483.4" fill="none" stroke="#d8d8d8" stroke-width="1.6"/>
<circle cx="159.9" cy="488.5" r="9" fill="#ffc107"/>
<text x="155.7" y="492.2" font-family="Liberation Sans" font-size="10.0" font-weight="400" fill="#1e1e1e" textLength="7.8" lengthAdjust="spacingAndGlyphs">A</text>
<text x="82.4" y="541.2" font-family="Liberation Sans" font-size="14.3" font-weight="400" fill="#dadada" textLength="24.9" lengthAdjust="spacingAndGlyphs">USF</text>
<path d="M336.3,532.4 L341.1,538.2 L345.9,532.4" fill="none" stroke="#d8d8d8" stroke-width="1.6"/>
<circle cx="159.9" cy="537.5" r="9" fill="#4fc3f7"/>
<text x="155.7" y="541.2" font-family="Liberation Sans" font-size="10.0" font-weight="400" fill="#1e1e1e" textLength="7.8" lengthAdjust="spacingAndGlyphs">A</text>
<text x="75.6" y="590.2" font-family="Liberation Sans" font-size="14.3" font-weight="400" fill="#dadada" textLength="33.0" lengthAdjust="spacingAndGlyphs">LACL</text>
<path d="M336.3,581.4 L341.1,587.2 L345.9,581.4" fill="none" stroke="#d8d8d8" stroke-width="1.6"/>
<g transform="translate(4.2,293.3)"><path d="M312.2,283.2 L317.9,289.0 L316.9,290.0 L314.7,290.3 L313.1,292.4 L312.4,295.8 L305.0,289.3 L308.4,288.6 L310.6,286.6 L311.0,284.4 Z" fill="#cfcfcf"/><path d="M308.2,292.8 L305.4,295.7" stroke="#cfcfcf" stroke-width="1.5" stroke-linecap="round"/></g>
<rect x="252.6" y="577.5" width="28.6" height="18.9" rx="3" fill="none" stroke="#3d3d3d" stroke-width="1"/>
<text x="255.9" y="590.5" font-family="Liberation Sans" font-size="10.4" font-weight="400" fill="#e0e0e0" textLength="21.2" lengthAdjust="spacingAndGlyphs" stroke="#e0e0e0" stroke-width="0.4">HPD</text>
<rect x="376" y="219" width="0" height="0"/>
<text x="375.3" y="205.0" font-family="Liberation Sans" font-size="14.4" font-weight="400" fill="#d6d6d6" textLength="122.0" lengthAdjust="spacingAndGlyphs">Графики политики</text>
<rect x="1729" y="219" width="753.8" height="2" fill="#323232"/>
<rect x="1735.7" y="219" width="72.9" height="2" fill="#4fc3f7"/>
<text x="1747.3" y="205.2" font-family="Liberation Sans" font-size="14.4" font-weight="400" fill="#e6e6e6" textLength="48.8" lengthAdjust="spacingAndGlyphs">Трафик</text>
<text x="1824.4" y="205.2" font-family="Liberation Sans" font-size="14.4" font-weight="400" fill="#9a9a9a" textLength="57.0" lengthAdjust="spacingAndGlyphs">Средний</text>
<text x="1909.0" y="205.2" font-family="Liberation Sans" font-size="14.4" font-weight="400" fill="#9a9a9a" textLength="76.0" lengthAdjust="spacingAndGlyphs">Контрмеры</text>
<text x="2013.0" y="205.2" font-family="Liberation Sans" font-size="14.4" font-weight="400" fill="#9a9a9a" textLength="63.0" lengthAdjust="spacingAndGlyphs">IP-адреса</text>
<text x="2103.9" y="205.2" font-family="Liberation Sans" font-size="14.4" font-weight="400" fill="#9a9a9a" textLength="74.4" lengthAdjust="spacingAndGlyphs">Протоколы</text>
<text x="2206.6" y="205.2" font-family="Liberation Sans" font-size="14.4" font-weight="400" fill="#9a9a9a" textLength="69.4" lengthAdjust="spacingAndGlyphs">TCP-флаги</text>
<text x="2304.0" y="205.2" font-family="Liberation Sans" font-size="14.4" font-weight="400" fill="#9a9a9a" textLength="58.0" lengthAdjust="spacingAndGlyphs">Запросы</text>
<text x="2389.7" y="205.2" font-family="Liberation Sans" font-size="14.4" font-weight="400" fill="#9a9a9a" textLength="70.8" lengthAdjust="spacingAndGlyphs">Коллектор</text>
<rect x="2483.8" y="195.3" width="2.2" height="2" fill="#bdbdbd"/><rect x="2487.6" y="195.5" width="10" height="1.6" fill="#bdbdbd"/>
<rect x="2483.8" y="199.6" width="2.2" height="2" fill="#bdbdbd"/><rect x="2487.6" y="199.8" width="10" height="1.6" fill="#bdbdbd"/>
<rect x="2483.8" y="203.9" width="2.2" height="2" fill="#bdbdbd"/><rect x="2487.6" y="204.1" width="10" height="1.6" fill="#bdbdbd"/>
<rect x="2505.6" y="194.8" width="12.8" height="10.4" fill="none" stroke="#bdbdbd" stroke-width="1.5"/><rect x="2505.6" y="194.8" width="12.8" height="2.4" fill="#bdbdbd"/><rect x="2511.3" y="195" width="1.5" height="10" fill="#bdbdbd"/>
<path d="M2526.8,203.3 L2532,198 L2537.2,203.3" fill="none" stroke="#bdbdbd" stroke-width="1.8"/>
<text x="379.6" y="503.2" font-family="Liberation Sans" font-size="14.3" font-weight="400" fill="#d6d6d6" textLength="24.8" lengthAdjust="spacingAndGlyphs">VAL</text>
<text x="464.9" y="503.2" font-family="Liberation Sans" font-size="14.3" font-weight="400" fill="#d6d6d6" textLength="151.6" lengthAdjust="spacingAndGlyphs">Валидация заголовков</text>
<text x="1329.2" y="503.2" font-family="Liberation Sans" font-size="14.3" font-weight="400" fill="#e0e0e0" textLength="48.4" lengthAdjust="spacingAndGlyphs">Трафик</text>
<rect x="1310.0" y="517.3" width="91.0" height="2" fill="#323232"/>
<rect x="1316.8" y="517.3" width="73.2" height="2" fill="#4fc3f7"/>
<text x="1475.7" y="503.2" font-family="Liberation Sans" font-size="14.3" font-weight="400" fill="#d6d6d6" textLength="25.9" lengthAdjust="spacingAndGlyphs">ACL</text>
<text x="1560.6" y="503.2" font-family="Liberation Sans" font-size="14.3" font-weight="400" fill="#d6d6d6" textLength="169.3" lengthAdjust="spacingAndGlyphs">Фильтрация по правилам</text>
<text x="2425.1" y="503.2" font-family="Liberation Sans" font-size="14.3" font-weight="400" fill="#e0e0e0" textLength="48.4" lengthAdjust="spacingAndGlyphs">Трафик</text>
<rect x="2406.0" y="517.3" width="91.0" height="2" fill="#323232"/>
<rect x="2412.7" y="517.3" width="73.1" height="2" fill="#4fc3f7"/>
<text x="379.4" y="801.4" font-family="Liberation Sans" font-size="14.3" font-weight="400" fill="#d6d6d6" textLength="33.5" lengthAdjust="spacingAndGlyphs">LACL</text>
<text x="464.3" y="801.4" font-family="Liberation Sans" font-size="14.3" font-weight="400" fill="#d6d6d6" textLength="336.8" lengthAdjust="spacingAndGlyphs">Фильтрация по правилам с ограничением трафика</text>
<text x="1329.4" y="801.4" font-family="Liberation Sans" font-size="14.3" font-weight="400" fill="#e0e0e0" textLength="48.5" lengthAdjust="spacingAndGlyphs">Трафик</text>
<rect x="1310.0" y="815.4" width="91.0" height="2" fill="#323232"/>
<rect x="1316.6" y="815.4" width="73.2" height="2" fill="#4fc3f7"/>
<path d="M17.6,68.6 L23.6,62.2 L29.6,68.6" fill="none" stroke="#8a8a8a" stroke-width="1.8"/>
<g fill="none" stroke="#98cbe4" stroke-width="1.5"><rect x="18.7" y="98.6" width="14.6" height="10.6" rx="1"/><path d="M20.9,106.5 L24.2,102.8 L26.6,104.8 L31,100.8"/><path d="M26,109.4 L26,112.6 M21.6,112.8 L30.4,112.8"/></g>
<rect x="25" y="124.0" width="1.3" height="64.1" fill="#98cbe4"/>
<circle cx="25.6" cy="140.7" r="3.6" fill="#98cbe4"/>
<circle cx="25.6" cy="172.6" r="3.6" fill="#98cbe4"/>
<g fill="none" stroke="#98cbe4" stroke-width="1.4"><path d="M23.8,200.5 L28,200.5 L29.5,205 L26,208 L22.5,205 Z"/><circle cx="21.2" cy="210.5" r="3.2"/><circle cx="29.6" cy="212" r="2.8"/><circle cx="31" cy="207" r="1.8"/></g>
<rect x="25" y="225.0" width="1.3" height="63.8" fill="#98cbe4"/>
<circle cx="25.6" cy="240.9" r="3.6" fill="#98cbe4"/>
<circle cx="25.6" cy="273.2" r="3.6" fill="#98cbe4"/>
<g fill="none" stroke="#98cbe4" stroke-width="1.3" stroke-linejoin="round"><path d="M25.9,303.2 Q28.75,299.4 31.4,303.2 L33.9,310.3 L29.2,310.3"/><path d="M27.1,304.6 L31.3,304.6 M28.2,307.5 L32.6,307.5"/><path d="M18.3,314.4 L29.7,314.4 L25.5,305.2 Q23.8,302.6 22.1,305.2 Z" fill="#181818"/><path d="M21.0,308.6 L26.7,308.6 M19.9,311.5 L27.9,311.5"/></g>
<rect x="4" y="326.3" width="44" height="31.5" fill="#263238"/>
<rect x="25" y="326.0" width="1.3" height="64.0" fill="#98cbe4"/>
<circle cx="25.6" cy="342.2" r="3.6" fill="#98cbe4"/>
<circle cx="25.6" cy="374.0" r="3.6" fill="#98cbe4"/>
<path d="M26,401.3 L29.9,405.0 L28.1,405.0 L28.1,410.2 L31.6,410.2 L31.6,408.5 L34.0,412.0 L31.6,415.5 L31.6,413.9 L28.1,413.9 L28.1,416.8 L23.9,416.8 L23.9,412.2 L20.5,412.2 L20.5,414.0 L18.0,410.2 L20.5,406.4 L20.5,408.2 L23.9,408.2 L23.9,405.0 L22.1,405.0 Z" fill="#2c3b43" stroke="#98cbe4" stroke-width="1.3" stroke-linejoin="round"/>
<rect x="25" y="427.0" width="1.3" height="64.0" fill="#98cbe4"/>
<circle cx="25.6" cy="443.5" r="3.6" fill="#98cbe4"/>
<circle cx="25.6" cy="475.4" r="3.6" fill="#98cbe4"/>
<rect x="0" y="491" width="48" height="1" fill="#2e2e2e"/>
<path d="M17.6,515.1 L23.6,508.7 L29.6,515.1" fill="none" stroke="#8a8a8a" stroke-width="1.8"/>
<g fill="none" stroke="#98cbe4" stroke-width="1.5"><circle cx="25.6" cy="548" r="4"/><path d="M18.6,559.8 L18.6,557.5 C18.6,554.5 21.6,553 25.6,553 C29.6,553 32.6,554.5 32.6,557.5 L32.6,559.8 Z"/></g>
<g fill="none" stroke="#98cbe4" stroke-width="1.3" stroke-linejoin="round"><path d="M23.6,583.6 L23.6,581.3 Q28.6,583.4 33.6,581.3 L33.6,586.4 Q33.6,591.4 28.8,592.8"/><path d="M18.6,584.6 Q23.4,586.7 28.2,584.6 L28.2,589.6 Q28.2,595.9 23.4,596.1 Q18.6,595.9 18.6,589.6 Z" fill="#181818"/></g><g fill="#98cbe4"><circle cx="21.5" cy="588.7" r="0.9"/><circle cx="25.4" cy="588.7" r="0.9"/><path d="M21.2,591.3 Q23.4,594.4 25.6,591.3 Z"/><circle cx="30.7" cy="585.6" r="0.9"/><path d="M29.5,589.5 Q30.7,587.8 32,589.5 Z"/></g>
<g fill="none" stroke="#98cbe4" stroke-width="1.5"><circle cx="28.8" cy="622" r="3.5"/><circle cx="20.2" cy="630.8" r="2"/><circle cx="31.2" cy="631.2" r="2"/><circle cx="20.2" cy="619" r="1.6"/><path d="M21.4,620.2 L26.2,621 M26.3,624.5 L21.5,629.5 M30,625.3 L30.8,629.2"/></g>
<rect x="0" y="644" width="48" height="1" fill="#2e2e2e"/>
<path d="M17.6,667.6 L23.6,661.2 L29.6,667.6" fill="none" stroke="#8a8a8a" stroke-width="1.8"/>
<g fill="none" stroke="#98cbe4" stroke-width="1.5"><circle cx="25.6" cy="704.4" r="2.6"/><path d="M24,697 L27.2,697 L27.8,699.3 L30.2,698.3 L32.5,700.6 L31.4,702.8 L33.3,703.2 L33.3,705.8 L31.4,706.2 L32.5,708.4 L30.2,710.7 L27.8,709.7 L27.2,711.9 L24,711.9 L23.4,709.7 L21,710.7 L18.7,708.4 L19.8,706.2 L17.9,705.8 L17.9,703.2 L19.8,702.8 L18.7,700.6 L21,698.3 L23.4,699.3 Z"/></g>
<rect x="25" y="723.0" width="1.3" height="95.4" fill="#98cbe4"/>
<circle cx="25.6" cy="739.0" r="3.6" fill="#98cbe4"/>
<circle cx="25.6" cy="771.6" r="3.6" fill="#98cbe4"/>
<circle cx="25.6" cy="803.4" r="3.6" fill="#98cbe4"/>
<g fill="none" stroke="#98cbe4" stroke-width="1.6"><path d="M24.0,842.6 L21.1,842.6 A7.2,7.2 0 1 1 31.0,842.6 L28.1,842.6"/><path d="M21.2,834.2 L22.4,835.3 M26.1,830.6 L26.1,832.2 M18.9,838.1 L20.5,838.1" stroke-width="1.2"/></g><path d="M31.6,832.4 L27.0,839.6 A1.9,1.9 0 1 1 24.4,837.6 Z" fill="none" stroke="#98cbe4" stroke-width="1.4" stroke-linejoin="round"/>
<g fill="none" stroke="#98cbe4" stroke-width="1.4"><path d="M21.2,879.5 C18,879.5 17.7,874.8 20.5,874 C20.5,869.6 26.8,868.3 28.2,872.2 C32,871.2 34,877.2 30.8,879.5"/><path d="M23.5,882 L23.5,876 M21.7,877.8 L23.5,876 L25.3,877.8 M27.6,876 L27.6,882 M25.8,880.2 L27.6,882 L29.4,880.2"/></g>
<rect x="25" y="893.4" width="1.3" height="31.0" fill="#98cbe4"/>
<circle cx="25.6" cy="909.4" r="3.6" fill="#98cbe4"/>
<g fill="none" stroke="#98cbe4" stroke-width="1.5"><circle cx="25.6" cy="943" r="1.5" fill="#98cbe4"/><path d="M22.6,939.6 A4.4,4.4 0 0 0 22.6,946.4 M28.6,939.6 A4.4,4.4 0 0 1 28.6,946.4"/><path d="M20,936.8 A8,8 0 0 0 20,949.2 M31.2,936.8 A8,8 0 0 1 31.2,949.2"/></g>
<g fill="none" stroke="#98cbe4" stroke-width="1.4"><circle cx="25.6" cy="980.7" r="7.6"/><path d="M25.6,975.5 L25.6,986 M20.4,980.7 L30.8,980.7"/><path d="M24,977 L25.6,975.3 L27.2,977 M24,984.4 L25.6,986.1 L27.2,984.4 M22,979.1 L20.3,980.7 L22,982.3 M29.2,979.1 L30.9,980.7 L29.2,982.3"/></g>
<rect x="0" y="999" width="48" height="1" fill="#2e2e2e"/>
<path d="M17.6,1024.2 L23.6,1017.8 L29.6,1024.2" fill="none" stroke="#8a8a8a" stroke-width="1.8"/>
<g fill="none" stroke="#98cbe4" stroke-width="1.5"><rect x="19.8" y="1054.2" width="11.6" height="14" rx="1.2"/><rect x="23" y="1052.2" width="5.2" height="2.6" fill="#98cbe4"/><path d="M22.6,1058.6 L28.6,1058.6 M22.6,1061.6 L28.6,1061.6 M22.6,1064.6 L28.6,1064.6"/></g></svg>
</body></html>
